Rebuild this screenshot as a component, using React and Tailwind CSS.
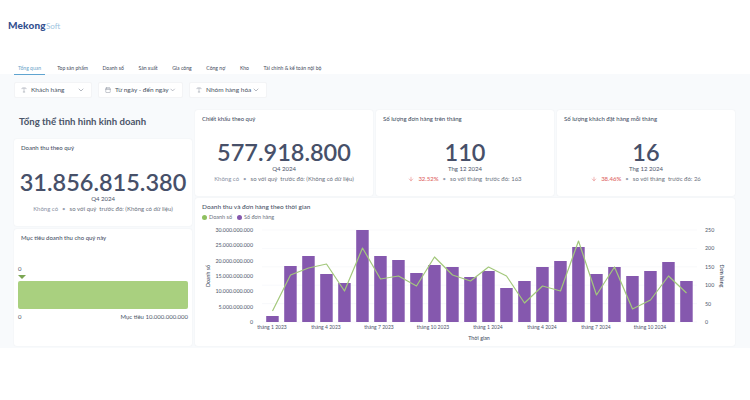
import React from 'react';
import { ChevronDown, Calendar, Type, ArrowDown } from 'lucide-react';

const tabs = ['Tổng quan', 'Top sản phẩm', 'Doanh số', 'Sản xuất', 'Gia công', 'Công nợ', 'Kho', 'Tài chính & kế toán nội bộ'];

const barTops = [316, 266, 256, 274, 283, 230, 256, 260, 273, 265, 267, 277, 271, 288, 281, 267, 261, 247, 274, 267, 276, 271, 262, 281];
const lineYs = [311, 275, 268, 264, 291, 248, 279, 276, 286, 257, 275, 281, 267, 276, 303, 286, 291, 241, 295, 267, 309, 300, 276, 293];
const leftTicks = ['0', '5.000.000.000', '10.000.000.000', '15.000.000.000', '20.000.000.000', '25.000.000.000', '30.000.000.000'];
const rightTicks = ['0', '50', '100', '150', '200', '250'];
const monthTicks = [
  ['tháng 1 2023', 272],
  ['tháng 4 2023', 326],
  ['tháng 7 2023', 379],
  ['tháng 10 2023', 433],
  ['tháng 1 2024', 488],
  ['tháng 4 2024', 542],
  ['tháng 7 2024', 596],
  ['tháng 10 2024', 650],
];

const Filter = ({ label, icon: Icon, width }) => (
  <div className={`flex h-4 items-center justify-between rounded-[2px] border border-gray-100 bg-white px-[6px] text-[6.5px] whitespace-nowrap text-gray-600 ${width}`}>
    <div className="flex items-center gap-[4px]">
      <Icon className="h-[6px] w-[6px] text-gray-500" strokeWidth={1.5} />
      <span>{label}</span>
    </div>
    <ChevronDown className="h-[8px] w-[8px] text-gray-500" strokeWidth={1.5} />
  </div>
);

const Card = ({ title, titleSize = 'text-[6px]', className, children }) => (
  <div className={`rounded-[3px] bg-white pt-[4px] shadow-[0_0_2px_rgba(15,23,42,0.06)] ${className}`}>
    <div className={`px-[7px] leading-[9px] font-medium text-[#4b5569] ${titleSize}`}>{title}</div>
    {children}
  </div>
);

const Stat = ({ value, period, change, rest, top }) => (
  <div className={`flex flex-col items-center ${top}`}>
    <div className="text-[23.5px] leading-[24px] font-semibold text-[#475069]">{value}</div>
    <div className="text-[6px] leading-[9px] text-[#4b5569]">{period}</div>
    <div className="mt-[1px] flex items-center text-[6px] leading-[9px] whitespace-pre text-[#6b7280]">
      {change}
      <span className="mx-[4px] text-gray-400">•</span>
      <span>{rest}</span>
    </div>
  </div>
);

const Drop = ({ value }) => (
  <span className="flex items-center font-semibold text-[#e06c6c]">
    <ArrowDown className="mr-[4px] h-[6px] w-[6px]" strokeWidth={2} />
    {value}
  </span>
);

const None = () => <span className="text-[#8b93a5]">Không có</span>;

const Chart = () => {
  const points = lineYs.map((y, i) => `${272.5 + i * 18},${y}`).join(' ');
  return (
    <svg viewBox="195 222 540 124" className="block h-[124px] w-[540px]" fontFamily="Lato, sans-serif">
      {rightTicks.map((t, i) => (
        <line key={t} x1="262" x2="697" y1={322 - i * 18.4} y2={322 - i * 18.4} stroke="#f1f3f6" strokeWidth="0.5" />
      ))}
      {barTops.map((top, i) => (
        <rect key={i} x={266.2 + i * 18} y={top} width="12.5" height={322 - top} fill="#8558ae" />
      ))}
      <polyline points={points} fill="none" stroke="#a3c87c" strokeWidth="1.2" strokeLinejoin="round" />
      {leftTicks.map((t, i) => (
        <text key={t} x="253" y={324 - i * 15.33} textAnchor="end" fontSize="5.3" fill="#4b5569">{t}</text>
      ))}
      {rightTicks.map((t, i) => (
        <text key={t} x="705" y={324 - i * 18.4} fontSize="5.3" fill="#4b5569">{t}</text>
      ))}
      {monthTicks.map(([t, x]) => (
        <text key={t} x={x} y="329" textAnchor="middle" fontSize="5" fill="#4b5569">{t}</text>
      ))}
      <text x="479" y="340" textAnchor="middle" fontSize="5.3" fontWeight="500" fill="#4b5569">Thời gian</text>
      <text transform="translate(210 276) rotate(-90)" textAnchor="middle" fontSize="5.3" fontWeight="500" fill="#4b5569">Doanh số</text>
      <text transform="translate(720 276) rotate(90)" textAnchor="middle" fontSize="5.3" fontWeight="500" fill="#4b5569">Đơn hàng</text>
    </svg>
  );
};

export default function App() {
  return (
    <div className="h-[400px] w-[750px] overflow-hidden bg-white font-['Lato',sans-serif]">
      <header className="h-[74px] px-[8px]">
        <div className="flex h-[52px] items-baseline pt-[18px]">
          <span className="text-[10px] font-black tracking-[0.2px] text-[#34508f]">Mekong</span>
          <span className="text-[8px] text-[#9cc3e0]">Soft</span>
        </div>
        <nav className="flex pl-[6px] text-[5.1px] leading-[8px] text-[#3f4a5c]">
          {tabs.map((tab, i) => (
            <div key={tab} className={`border-b px-[4px] pt-[12px] pb-[2px] ${i === 0 ? 'mr-[8px] border-[#5fa4d0] text-[#6ba4c9]' : 'mr-[6.6px] border-transparent'}`}>
              {tab}
            </div>
          ))}
        </nav>
      </header>

      <main className="h-[274px] bg-[#f8fafc] px-[14px] pt-[8px]">
        <div className="flex gap-[6px]">
          <Filter label="Khách hàng" icon={Type} width="w-[78px]" />
          <Filter label="Từ ngày - đến ngày" icon={Calendar} width="w-[85px]" />
          <Filter label="Nhóm hàng hóa" icon={Type} width="w-[78px]" />
        </div>

        <div className="mt-[12px] flex gap-[3px]">
          <div className="w-[178px]">
            <h1 className="h-[29px] pt-[5px] pl-[5px] text-[9.6px] leading-[14px] font-bold text-[#4b5569]">Tổng thể tình hình kinh doanh</h1>
            <Card title="Doanh thu theo quý" className="h-[87px]">
              <Stat value="31.856.815.380" period="Q4 2024" change={<None />} rest="so với quý  trước đó: (Không có dữ liệu)" top="pt-[18px]" />
            </Card>
            <Card title="Mục tiêu doanh thu cho quý này" className="mt-[3px] h-[117px]">
              <div className="px-[4px]">
                <div className="mt-[23px] text-[6px] leading-[8px] text-[#4b5569]">0</div>
                <div className="mt-[2px] h-0 w-0 border-x-[4px] border-t-[4px] border-x-transparent border-t-[#7ba653]" />
                <div className="mt-[2px] h-[28px] rounded-[2px] bg-[#a9d07f]" />
                <div className="mt-[3px] flex justify-between text-[6px] leading-[9px] text-[#4b5569]">
                  <span>0</span>
                  <span>Mục tiêu 10.000.000.000</span>
                </div>
              </div>
            </Card>
          </div>

          <div className="w-[540px]">
            <div className="flex gap-[3px]">
              <Card title="Chiết khấu theo quý" className="h-[86px] flex-1">
                <Stat value="577.918.800" period="Q4 2024" change={<None />} rest="so với quý  trước đó: (Không có dữ liệu)" top="pt-[17px]" />
              </Card>
              <Card title="Số lượng đơn hàng trên tháng" className="h-[86px] flex-1">
                <Stat value="110" period="Thg 12 2024" change={<Drop value="32.52%" />} rest="so với tháng  trước đó: 163" top="pt-[17px]" />
              </Card>
              <Card title="Số lượng khách đặt hàng mỗi tháng" className="h-[86px] flex-1">
                <Stat value="16" period="Thg 12 2024" change={<Drop value="38.46%" />} rest="so với tháng  trước đó: 26" top="pt-[17px]" />
              </Card>
            </div>
            <Card title="Doanh thu và đơn hàng theo thời gian" titleSize="text-[6.5px]" className="mt-[2px] h-[148px]">
              <div className="flex items-center gap-[5px] pt-[2px] pb-[1px] pl-[7px] text-[5.5px] leading-[8px] text-[#6b7280]">
                <span className="flex items-center gap-[2px]"><span className="h-[5px] w-[5px] rounded-full bg-[#8fc05f]" />Doanh số</span>
                <span className="flex items-center gap-[2px]"><span className="h-[5px] w-[5px] rounded-full bg-[#8558ae]" />Số đơn hàng</span>
              </div>
              <Chart />
            </Card>
          </div>
        </div>
      </main>
    </div>
  );
}
